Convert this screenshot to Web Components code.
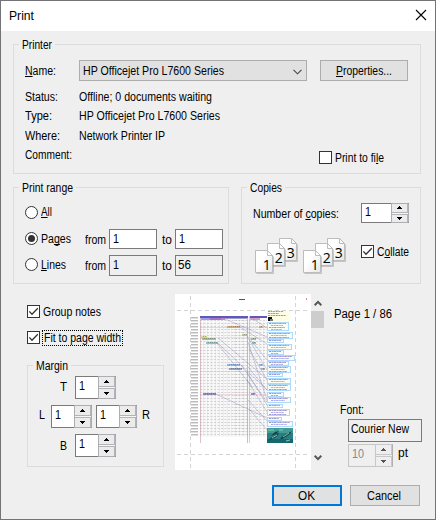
<!DOCTYPE html>
<html lang="en">
<head>
<meta charset="utf-8">
<title>Print</title>
<style>
  html, body { margin: 0; width: 436px; height: 520px; overflow: hidden; }
  body { font: 12px/16px "Liberation Sans", Arial, sans-serif; color: #000; background: #747478; }
  u { text-decoration: underline 1px; text-underline-offset: 1px; text-decoration-skip-ink: none; }
</style>
</head>
<body>
<print-dialog></print-dialog>
<script>
const define = (name, html, setup) => {
  const template = document.createElement('template');
  template.innerHTML = html;
  customElements.define(name, class extends HTMLElement {
    connectedCallback() {
      if (this.shadowRoot) return;
      this.attachShadow({ mode: 'open' }).append(template.content.cloneNode(true));
      if (setup) setup(this, this.shadowRoot);
    }
  });
};

/* A single line of text, condensed to the width in its w attribute. */
define('ui-text', `
  <style>
    :host { display: block; flex: none; height: 16px; white-space: nowrap; }
    span { display: inline-block; transform-origin: 0 0; line-height: 16px; }
  </style><span><slot></slot></span>`, (host, root) => {
  const w = +host.getAttribute('w');
  const span = root.querySelector('span');
  host.style.width = w + 'px';
  span.style.transform = 'scaleX(' + w / span.getBoundingClientRect().width + ')';
});

define('ui-row', `
  <style>:host { display: flex; align-items: flex-start; flex: none; }</style><slot></slot>`);

define('ui-group', `
  <style>
    :host { display: flex; flex-direction: column; box-sizing: border-box; border: 1px solid #dcdcdc; flex: none; }
    .legend { margin: -8px 0 0 5px; padding: 0 3px; background: #efefef; align-self: flex-start; height: 16px; }
  </style><div class="legend"><slot name="legend"></slot></div><slot></slot>`);

define('ui-check', `
  <style>
    :host { display: block; flex: none; width: 13px; height: 13px; box-sizing: border-box; border: 1px solid #333; background: #fff; }
    svg { display: none; }
    :host([checked]) svg { display: block; }
  </style><svg width="11" height="11"><path d="M1.3 5.4 4 8.2 9.8 2.2" fill="none" stroke="#333" stroke-width="1.3"/></svg>`);

define('ui-radio', `
  <style>
    :host { display: block; flex: none; width: 13px; height: 13px; }
    svg { display: block; }
    .dot { display: none; }
    :host([checked]) .dot { display: block; }
  </style><svg width="13" height="13"><circle cx="6.5" cy="6.5" r="6" fill="#fff" stroke="#333"/><circle class="dot" cx="6.5" cy="6.5" r="3.5" fill="#333"/></svg>`);

define('ui-field', `
  <style>
    :host { display: flex; flex: none; box-sizing: border-box; border: 1px solid #7a7a7a; background: #fff; padding: 1px 0 0 3px; }
    :host([flat]) { background: #efefef; }
  </style><slot></slot>`);

define('ui-spin', `
  <style>
    :host { display: flex; flex: none; box-sizing: border-box; width: 41px; height: 23px; border: 1px solid #7a7a7a;
      border-right-color: #adadb2; background: #fff; padding-left: 3px; }
    .value { flex: 1; }
    .arrows { width: 17px; display: flex; flex-direction: column; gap: 1px; background: #f6f6f6; box-sizing: border-box; border-left: 1px solid #adadb2; margin: -1px 0; border-top: 1px solid #adadb2; border-bottom: 1px solid #adadb2; }
    .arrows div { flex: 1; box-sizing: border-box; background: #ebebeb; border: 1px solid #b4b4b8; border-left-width: 0; border-top-width: 0; display: flex; align-items: center; justify-content: center; }
    .arrows div + div { border-width: 1px 1px 0 0; }
    svg { display: block; }
    path { fill: #000; }
    :host([disabled]) { background: #efefef; border-color: #c5c5c5 #b0b0b4 #c5c5c5 #c5c5c5; color: #888; }
    :host([disabled]) path { fill: #555; }
    :host([disabled]) .arrows, :host([disabled]) .arrows div { border-color: #c8c8ca; background: #efefef; }
  </style>
  <div class="value"><slot></slot></div>
  <div class="arrows"><div><svg width="5" height="3"><path d="M2 0h1v1h1v1h1v1H0V2h1V1h1z"/></svg></div>
  <div><svg width="5" height="3"><path d="M0 0h5v1H4v1H3v1H2V2H1V1H0z"/></svg></div></div>`);

define('ui-button', `
  <style>
    :host { display: flex; flex: none; box-sizing: border-box; height: 21px; border: 1px solid #adadad; background: #e1e1e1; padding-top: 2px; }
    :host([default]) { border: 2px solid #0078d7; padding-top: 1px; }
    :host([menu]) svg { display: block; }
    svg { display: none; margin: 6px 4px 0 auto; }
  </style><slot></slot><svg width="9" height="6"><path d="M.5.8 4.5 4.8 8.5.8" fill="none" stroke="#444" stroke-width="1.1"/></svg>`);

/* Three overlapping numbered sheets. */
define('page-stack', `
  <style>:host { display: block; flex: none; width: 44px; height: 37px; } svg { display: block; }</style>
  <svg width="44" height="37" font-family="'Open Sans','Noto Sans',sans-serif" font-size="14">
    <defs><linearGradient id="g" x2="1" y2="1"><stop offset=".4" stop-color="#fff"/><stop offset="1" stop-color="#e6e6e6"/></linearGradient></defs>
    <g id="sheets"></g>
  </svg>`, (host, root) => {
  root.querySelector('#sheets').innerHTML = [[3, 24.5, .5], [2, 12.5, 5.5], [1, .5, 12.5]].map(([n, x, y]) => `
    <g transform="translate(${x} ${y})">
      <path d="M1 23H18V6" fill="none" stroke="#999" stroke-opacity=".5"/>
      <path d="M0 0H12L17 5V22H0Z" fill="url(#g)" stroke="#bcbcbc"/>
      <path d="M12 0V5H17Z" fill="#fff" stroke="#bcbcbc"/>
      <text x="7.2" y="19.5">${n}</text>
    </g>`).join('');
});

/* Miniature of the printed page: margins, timeline chart, notes and photograph. */
define('page-preview', `
  <style>:host { display: block; flex: none; width: 136px; height: 176px; background: #fff; } svg { display: block; }</style>
  <svg width="136" height="176"></svg>`, (host, root) => {
  const out = [];
  const rect = (x, y, w, h, fill, o = 1, extra = '') => out.push(`<rect x="${x}" y="${y}" width="${w}" height="${h}" fill="${fill}" opacity="${o}" ${extra}/>`);
  const line = (x1, y1, x2, y2, c, o = 1, extra = '') => out.push(`<path d="M${x1} ${y1}L${x2} ${y2}" stroke="${c}" opacity="${o}" ${extra}/>`);
  const dash = 'stroke-dasharray="4 3"';
  line(15.5, 2, 15.5, 174, '#d4d4d4', 1, dash);
  line(120.5, 2, 120.5, 174, '#d4d4d4', 1, dash);
  line(2, 16.5, 134, 16.5, '#d4d4d4', 1, dash);
  line(2, 160.5, 134, 160.5, '#d4d4d4', 1, dash);
  rect(64, 5, 6, 1, '#555'); rect(131, 4, 1, 2, '#d88');
  rect(25, 22, 67, 121, '#f8f8f9');
  for (let y = 23; y < 143; y += 3) {
    rect(16, y, 7, 1, '#777', .5);
    rect(16, y + 1, 7, 1, '#bbb', .45);
    line(25, y + .5, 92, y + .5, '#888', .32, 'stroke-dasharray="2 1.5"');
    line(59, y + .5, 71, y + .5, '#777', .25, 'stroke-dasharray="1 1.4"');
  }
  for (let x = 28; x < 92; x += 4) line(x + .5, 28, x + .5, 142, '#ccc', .25);
  for (const [y, c] of [[33, '#e4a090'], [43, '#dfc8a0'], [77, '#a8c8f0'], [100, '#e0b0c0']]) rect(25, y, 67, 1, c, .4);
  line(25.5, 24, 25.5, 149, '#c79aa2', .6);
  line(72.5, 22, 72.5, 149, '#b98f9d', .6);
  line(74.5, 22, 74.5, 149, '#cba8af', .6);
  rect(25, 22, 48, 2, '#6058b8'); rect(75, 22, 17, 2, '#6058b8');
  rect(26, 24, 20, 2, '#8583e8', .8); rect(35, 24, 15, 2, '#a86ab8', .8); rect(50, 24, 22, 1, '#7d7ab6', .7);
  rect(75, 24, 10, 2, '#c478b5', .7);
  const bars = [[52, 32, 13, '#c49058'], [26, 42, 6, '#c4cf70'], [67, 40, 5, '#b8aa70'], [27, 44, 14, '#88a15a'],
    [31, 48, 12, '#55acb0'], [52, 70, 13, '#6b99d3'], [54, 74, 13, '#667da5'], [28, 99, 13, '#5d5b9e'],
    [84, 32, 4, '#c49058'], [76, 44, 5, '#88a15a'], [77, 48, 4, '#55acb0'], [84, 70, 4, '#6b99d3'], [86, 74, 4, '#8888a0'], [76, 99, 4, '#6761ac']];
  for (const [x, y, w, c] of bars) {
    rect(x, y, w, 2, c, .65);
    line(x + 2, y + .5, x + w, y + .5, '#333', .3, 'stroke-dasharray="1 1"');
  }
  for (const [a, b, c, d] of [[50, 25, 92, 43], [65, 33, 92, 50], [43, 44, 92, 85], [43, 49, 92, 96], [42, 49, 78, 94],
    [72, 42, 92, 76], [75, 45, 92, 66], [73, 48, 92, 106], [74, 55, 92, 86], [73, 73, 92, 96], [41, 100, 92, 124],
    [72, 78, 92, 111], [72, 86, 92, 118], [73, 106, 92, 127], [74, 115, 92, 136], [78, 25, 92, 34], [66, 71, 92, 108]])
    line(a, b, c, d, '#6a68a8', .38, 'stroke-width=".8"');
  /* Notes: offset x, y, width, height. */
  rect(92, 17, 23, 11, '#fffde2');
  for (const [y, w] of [[17, 15], [19, 11], [21, 18]]) line(93, y + .5, 93 + w, y + .5, '#5552b0', .6, 'stroke-dasharray="2 .6"');
  rect(93, 23, 4, 4, '#111'); rect(95, 25, 3, 2, '#777');
  for (const [x, y, w, h] of [[92, 28, 21, 9], [92, 38, 25, 7], [92, 45, 16, 4], [92, 50, 24, 6], [92, 56, 16, 5], [92, 61, 27, 6],
    [92, 67, 21, 5], [92, 72, 23, 7], [92, 79, 15, 4], [92, 84, 23, 6], [92, 90, 23, 7], [92, 98, 16, 5], [92, 103, 23, 6],
    [92, 110, 15, 4], [92, 115, 22, 7], [92, 123, 14, 4], [92, 127, 25, 6]]) {
    rect(x + .5, y + .5, w, h - 1, '#fbfbf2', 1, 'stroke="#addafc"');
    for (let k = 1, i = 0; k < h - 1; k += 2, i++)
      line(x + 2 + (i % 2) * 2, y + k + .5, x + w - 2 - (i * 3 % 5), y + k + .5, i % 2 ? '#7a74e4' : '#5a54c4', .6, 'stroke-dasharray="2.4 .7 1.5 .5"');
  }
  /* Underwater photograph. */
  rect(92, 134, 26, 15, '#257f83');
  rect(92, 134, 26, 5, '#4aa49b', .75); rect(92, 145, 26, 4, '#14666f');
  out.push(`<path d="M93 147c4-5 7-4 11-9-1 4-4 6-7 7-2 0-2 1-4 2M105 145c3-4 7-5 12-8-2 4-6 5-8 7-2 1-3 1-4 1M96 142l5-2 3-3-4 1z" fill="#123b42"/>
    <path d="M97 144l5-3M108 143l6-4M111 147l4-1" stroke="#bdd9b8" stroke-width=".8"/><path d="M93 136h6m5 0h4" stroke="#86c7ac"/>`);
  root.querySelector('svg').innerHTML = out.join('');
});

define('preview-scroll', `
  <style>
    :host { display: flex; flex-direction: column; flex: none; width: 13px; height: 176px; align-items: center; }
    .thumb { width: 13px; height: 17px; background: #cdcdcd; margin: 5px 0 auto; }
    svg { display: block; flex: none; }
    .up { margin-top: 6px; } .down { margin-bottom: 9px; }
  </style>
  <svg class="up" width="8" height="6"><path d="M.7 5.2 4 1.9 7.3 5.2" fill="none" stroke="#555" stroke-width="2"/></svg>
  <div class="thumb"></div>
  <svg class="down" width="8" height="6"><path d="M.7.8 4 4.1 7.3.8" fill="none" stroke="#555" stroke-width="2"/></svg>`);

define('title-bar', `
  <style>
    :host { display: flex; height: 30px; background: #fff; justify-content: space-between; box-sizing: border-box; padding: 7px 8px 0 8px; }
    svg { display: block; margin-top: 1px; }
  </style><slot></slot><svg width="12" height="12"><path d="M1 1 11 11M11 1 1 11" stroke="#000" stroke-width="1.1"/></svg>`);

define('print-dialog', `
  <style>
    :host { display: block; box-sizing: border-box; width: 436px; height: 520px; padding: 1px; }
    .window { height: 518px; background: #efefef; overflow: hidden; }
    .col { display: flex; flex-direction: column; flex: none; }
    .focus { outline: 1px dotted #000; outline-offset: -1px; box-sizing: border-box; width: 81px; height: 16px; padding-left: 2px; margin: -1px 0 0 2px; }
    u { text-decoration: underline 1px; text-underline-offset: 1px; text-decoration-skip-ink: none; }
  </style>
  <div class="window">
    <title-bar><ui-text w="25">Print</ui-text></title-bar>

    <ui-group style="margin:13px 0 0 12px;width:408px;height:130px">
      <ui-text slot="legend" w="30">Printer</ui-text>
      <ui-row style="height:36px;padding:7px 0 0 11px;box-sizing:border-box">
        <ui-text w="31" style="margin-top:3px"><u>N</u>ame:</ui-text>
        <ui-button menu style="width:228px;margin-left:23px;padding-left:3px"><ui-text w="141">HP Officejet Pro L7600 Series</ui-text></ui-button>
        <ui-button style="width:88px;margin-left:13px;padding-left:15px"><ui-text w="56"><u>P</u>roperties...</ui-text></ui-button>
      </ui-row>
      <ui-row style="height:19px;padding-left:11px"><ui-text w="33">Status:</ui-text><ui-text w="133" style="margin-left:21px">Offline; 0 documents waiting</ui-text></ui-row>
      <ui-row style="height:20px;padding-left:11px"><ui-text w="27">Type:</ui-text><ui-text w="141" style="margin-left:27px">HP Officejet Pro L7600 Series</ui-text></ui-row>
      <ui-row style="height:19px;padding-left:11px"><ui-text w="35">Where:</ui-text><ui-text w="86" style="margin-left:19px">Network Printer IP</ui-text></ui-row>
      <ui-row style="height:20px;padding-left:11px"><ui-text w="47">Comment:</ui-text><ui-check style="margin:4px 3px 0 247px"></ui-check><ui-text w="49" style="margin-top:3px">Print to fi<u>l</u>e</ui-text></ui-row>
    </ui-group>

    <ui-row style="margin:13px 0 0 12px;gap:12px">
      <ui-group style="width:216px;height:97px">
        <ui-text slot="legend" w="51">Print range</ui-text>
        <ui-row style="height:33px;padding-left:11px;align-items:center;box-sizing:border-box"><ui-radio></ui-radio><ui-text w="11" style="margin:-1px 0 0 3px"><u>A</u>ll</ui-text></ui-row>
        <ui-row style="height:26px;padding-left:11px">
          <ui-radio checked style="margin-top:3px"></ui-radio><ui-text w="30" style="margin:2px 0 0 3px">Pa<u>g</u>es</ui-text>
          <ui-text w="21" style="margin:3px 0 0 14px">from</ui-text>
          <ui-field style="width:48px;height:20px;margin-left:3px"><ui-text w="6">1</ui-text></ui-field>
          <ui-text w="10" style="margin:3px 3px 0 5px">to</ui-text>
          <ui-field style="width:48px;height:20px"><ui-text w="6">1</ui-text></ui-field>
        </ui-row>
        <ui-row style="height:26px;padding-left:11px">
          <ui-radio style="margin-top:3px"></ui-radio><ui-text w="25" style="margin:2px 0 0 3px"><u>L</u>ines</ui-text>
          <ui-text w="21" style="margin:3px 0 0 19px">from</ui-text>
          <ui-field flat style="width:48px;height:21px;margin-left:3px"><ui-text w="6">1</ui-text></ui-field>
          <ui-text w="10" style="margin:3px 3px 0 5px">to</ui-text>
          <ui-field flat style="width:48px;height:21px;padding-left:2px"><ui-text w="13">56</ui-text></ui-field>
        </ui-row>
      </ui-group>

      <ui-group style="width:180px;height:97px">
        <ui-text slot="legend" w="32">Copies</ui-text>
        <ui-row style="height:42px;padding:7px 0 0 11px;box-sizing:border-box">
          <ui-text w="86" style="margin-top:3px">Number of <u>c</u>opies:</ui-text>
          <ui-spin style="width:48px;height:20px;margin-left:22px"><ui-text w="6">1</ui-text></ui-spin>
        </ui-row>
        <ui-row style="padding-left:13px;gap:4px">
          <page-stack></page-stack><page-stack></page-stack>
          <ui-check checked style="margin:7px 0 0 10px"></ui-check><ui-text w="32" style="margin:6px 0 0 -1px">C<u>o</u>llate</ui-text>
        </ui-row>
      </ui-group>
    </ui-row>

    <ui-row style="height:191px;padding:10px 0 0 26px;box-sizing:border-box">
      <div class="col" style="width:148px;padding-top:11px">
        <ui-row style="height:26px"><ui-check checked></ui-check><ui-text w="58" style="margin:-1px 0 0 3px">Group notes</ui-text></ui-row>
        <ui-row style="height:34px"><ui-check checked></ui-check><div class="focus"><ui-text w="77">Fit to page width</ui-text></div></ui-row>
        <ui-group style="width:137px;height:102px">
          <ui-text slot="legend" w="32">Margin</ui-text>
          <ui-row style="height:31px;padding:2px 0 0 32px;box-sizing:border-box"><ui-text w="7" style="margin:3px 8px 0 0">T</ui-text><ui-spin><ui-text w="6" style="margin-top:1px">1</ui-text></ui-spin></ui-row>
          <ui-row style="height:29px;padding-left:11px"><ui-text w="6" style="margin:2px 6px 0 0">L</ui-text><ui-spin><ui-text w="6" style="margin-top:1px">1</ui-text></ui-spin><ui-spin style="margin-left:4px"><ui-text w="6" style="margin-top:1px">1</ui-text></ui-spin><ui-text w="8" style="margin:2px 0 0 5px">R</ui-text></ui-row>
          <ui-row style="padding-left:32px"><ui-text w="7" style="margin:4px 8px 0 0">B</ui-text><ui-spin><ui-text w="6" style="margin-top:1px">1</ui-text></ui-spin></ui-row>
        </ui-group>
      </div>
      <page-preview></page-preview>
      <preview-scroll></preview-scroll>
      <div class="col" style="padding:12px 0 0 10px">
        <ui-text w="58">Page 1 / 86</ui-text>
        <ui-text w="24" style="margin:80px 0 0 6px">Font:</ui-text>
        <ui-field flat style="width:74px;height:23px;margin:1px 0 2px 14px;padding-left:2px"><ui-text w="58">Courier New</ui-text></ui-field>
        <ui-row style="padding-left:14px"><ui-spin disabled style="width:45px"><ui-text w="12" style="margin-top:1px">10</ui-text></ui-spin><ui-text w="10" style="margin:1px 0 0 5px">pt</ui-text></ui-row>
      </div>
    </ui-row>

    <ui-row style="justify-content:flex-end;gap:8px;padding:10px 15px 0 0">
      <ui-button default style="width:70px;padding-left:24px"><ui-text w="17">OK</ui-text></ui-button>
      <ui-button style="width:70px;padding-left:16px"><ui-text w="34">Cancel</ui-text></ui-button>
    </ui-row>
  </div>`);
</script>
</body>
</html>
